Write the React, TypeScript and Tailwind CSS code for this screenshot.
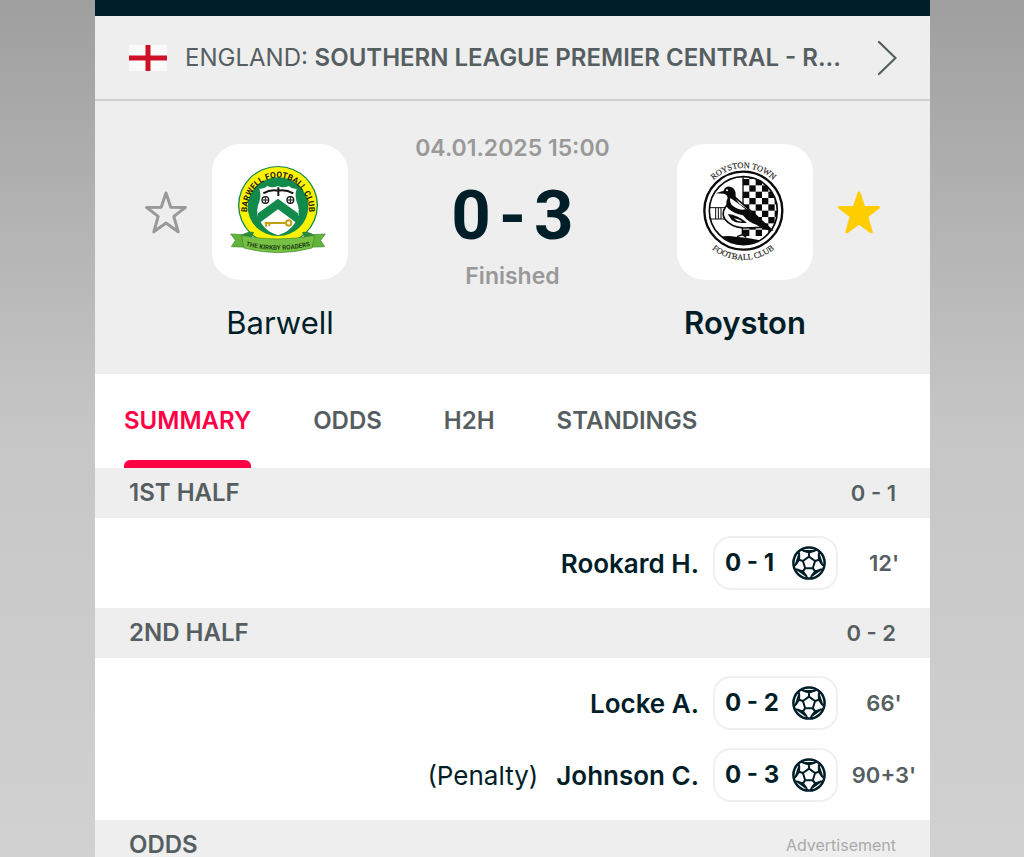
import type { ReactNode } from 'react';

type Goal = { player: string; score: string; time: string; note?: string };

const tabs = ['SUMMARY', 'ODDS', 'H2H', 'STANDINGS'];

const firstHalf: Goal[] = [{ player: 'Rookard H.', score: '0 - 1', time: "12'" }];

const secondHalf: Goal[] = [
  { player: 'Locke A.', score: '0 - 2', time: "66'" },
  { player: 'Johnson C.', score: '0 - 3', time: "90+3'", note: '(Penalty)' },
];

const STAR = 'M22 2 L26.8 16.2 L41.5 16.4 L29.8 25.4 L34.2 40.8 L22 32 L9.8 40.8 L14.2 25.4 L2.5 16.4 L17.2 16.2 Z';

function EnglandFlag() {
  return (
    <svg className="h-[26px] w-[38px] shrink-0" viewBox="0 0 38 26" aria-label="England">
      <rect width="38" height="26" fill="#fafafa" />
      <rect y="10.5" width="38" height="5" fill="#ce1126" />
      <rect x="16.5" width="5" height="26" fill="#ce1126" />
    </svg>
  );
}

function BallIcon() {
  const point = (r: number, deg: number) => {
    const a = (deg * Math.PI) / 180;
    return `${(17 + r * Math.cos(a)).toFixed(1)} ${(17 + r * Math.sin(a)).toFixed(1)}`;
  };
  const spokes = [-90, -18, 54, 126, 198];

  return (
    <svg className="size-[34px] shrink-0" viewBox="0 0 34 34" fill="none" stroke="#001e28" strokeWidth="2" strokeLinejoin="round">
      <circle cx="17" cy="17" r="15.6" strokeWidth="2.5" />
      <path d={`M${spokes.map((d) => point(6.4, d)).join(' L')} Z`} />
      {spokes.map((d) => (
        <path
          key={d}
          d={`M${point(6.4, d)} L${point(10.4, d)} M${point(15.4, d - 29)} L${point(13.2, d - 24)} L${point(10.4, d)} L${point(13.2, d + 24)} L${point(15.4, d + 29)} M${point(13.2, d - 24)} L${point(13.2, d + 24)}`}
        />
      ))}
    </svg>
  );
}

function BarwellCrest() {
  return (
    <svg className="size-full" viewBox="6 12 408 408" aria-label="Barwell crest">
      <defs>
        <path id="barwell-arc" d="M111 216 A93 103 0 0 1 297 216" />
        <path id="barwell-ribbon" d="M98 315 Q204 344 310 315" />
      </defs>
      <ellipse cx="204" cy="196" rx="120" ry="118" fill="#128a4c" />
      <ellipse cx="204" cy="196" rx="116" ry="115" fill="#fff200" />
      <ellipse cx="204" cy="200" rx="91" ry="88" fill="#128a4c" />
      <text fontFamily="Roboto, sans-serif" fontSize="25" fontWeight="700" fill="#1d1d0a">
        <textPath href="#barwell-arc" startOffset="50%" textAnchor="middle">BARWELL FOOTBALL CLUB</textPath>
      </text>
      <path d="M148 146 Q162 148 172 138 Q188 146 204 138 Q220 146 236 138 Q246 148 260 146 Q252 170 264 196 Q272 226 254 250 Q238 276 204 286 Q170 276 154 250 Q136 226 144 196 Q156 170 148 146 Z" fill="#ffffff" />
      <path d="M204 176 L264 220 L264 252 L204 208 L144 252 L144 220 Z" fill="#128a4c" />
      <path d="M160 160 Q180 148 204 152 Q228 148 250 160 M205 142 V168" fill="none" stroke="#161616" strokeWidth="6" />
      <g fill="none" stroke="#161616" strokeWidth="4">
        <circle cx="166" cy="180" r="10" />
        <circle cx="241" cy="180" r="10" />
        <path d="M166 170 V190 M156 180 H176 M241 170 V190 M231 180 H251" strokeWidth="3" />
      </g>
      <circle cx="236" cy="249" r="8" fill="none" stroke="#c3a012" strokeWidth="6" />
      <path d="M228 249 H164 M168 249 V260 M178 249 V258" fill="none" stroke="#c3a012" strokeWidth="6" />
      <path d="M62 282 L104 284 L116 322 L64 320 L76 301 Z M346 282 L304 284 L292 322 L344 320 L332 301 Z" fill="#62b33b" stroke="#3d8a2c" strokeWidth="2" />
      <path d="M94 286 Q204 308 314 286 L306 324 Q204 352 102 324 Z" fill="#76c043" stroke="#3d8a2c" strokeWidth="2" />
      <path d="M94 286 Q112 272 132 276 L126 292 Z M314 286 Q296 272 276 276 L282 292 Z" fill="#2c8a3a" />
      <text fontFamily="Roboto, sans-serif" fontSize="19" fontWeight="700" fill="#1e4317">
        <textPath href="#barwell-ribbon" startOffset="50%" textAnchor="middle">THE KIRKBY ROADERS</textPath>
      </text>
    </svg>
  );
}

function RoystonCrest() {
  const squares: ReactNode[] = [];
  for (let row = 0; row < 10; row++) {
    for (let col = 0; col < 6; col++) {
      if ((row + col) % 2 === 1) {
        squares.push(<rect key={`${row}-${col}`} x={204 + col * 19} y={98 + row * 19} width="19" height="19" fill="#0a0a0a" />);
      }
    }
  }

  return (
    <svg className="size-full" viewBox="6 12 408 408" aria-label="Royston Town crest">
      <defs>
        <path id="royston-top" d="M77 212 A128 128 0 0 1 333 212" />
        <path id="royston-bottom" d="M57 212 A148 148 0 0 0 353 212" />
        <clipPath id="royston-disc">
          <circle cx="205" cy="212" r="102" />
        </clipPath>
      </defs>
      <g fontFamily="Liberation Serif, serif" fontSize="25" fill="#222222" stroke="#222222" strokeWidth="0.5">
        <text>
          <textPath href="#royston-top" startOffset="50%" textAnchor="middle">ROYSTON  TOWN</textPath>
        </text>
        <text>
          <textPath href="#royston-bottom" startOffset="50%" textAnchor="middle">FOOTBALL CLUB</textPath>
        </text>
      </g>
      <circle cx="205" cy="212" r="117" fill="#ffffff" stroke="#0a0a0a" strokeWidth="7" />
      <g clipPath="url(#royston-disc)">
        <path d="M204 100 V230" stroke="#0a0a0a" strokeWidth="4" />
        {squares}
        <path d="M100 203 H150 M100 237 H160 M122 203 V237 M130 203 V237 M138 203 V237" stroke="#0a0a0a" strokeWidth="3" />
        <path d="M100 298 Q150 284 180 290 Q230 294 270 304 V330 H100 Z" fill="#0a0a0a" />
        <path d="M152 200 Q138 220 150 238 Q168 262 206 264 L262 262 L292 272 L240 224 Q208 196 178 170 Z" fill="#ffffff" stroke="#0a0a0a" strokeWidth="5" />
      </g>
      {/* Crow */}
      <path d="M122 160 L146 152 Q150 138 166 140 Q182 144 182 164 Q180 178 194 192 Q216 206 240 224 L296 272 Q270 272 244 254 Q220 248 204 226 Q178 222 158 204 Q150 190 158 174 Q156 162 146 161 Z" fill="#0a0a0a" />
      <path d="M166 174 Q182 184 212 208 Q192 212 174 198 Q162 188 166 174 Z" fill="#ffffff" />
      <path d="M158 222 Q186 224 216 248 Q186 252 170 240 Z" fill="#0a0a0a" />
      <path d="M176 235 Q190 236 202 244 Q188 246 176 235 Z" fill="#ffffff" />
      <path d="M202 264 V284 L186 290 M202 284 L214 292" fill="none" stroke="#0a0a0a" strokeWidth="4" />
      <circle cx="156" cy="151" r="3" fill="#ffffff" />
      <circle cx="205" cy="212" r="102" fill="none" stroke="#0a0a0a" strokeWidth="5" />
    </svg>
  );
}

function Team({ name, bold, children }: { name: string; bold?: boolean; children: ReactNode }) {
  return (
    <div className="flex w-[136px] shrink-0 flex-col items-center gap-6">
      <div className="size-[136px] overflow-hidden rounded-[28px] bg-white">{children}</div>
      <p className={`text-[31px] leading-[38px] ${bold ? 'font-semibold' : 'font-normal'}`}>{name}</p>
    </div>
  );
}

function FavouriteButton({ label, active }: { label: string; active?: boolean }) {
  return (
    <button type="button" aria-label={label} aria-pressed={!!active} className="mt-[47px] size-11 shrink-0">
      <svg className="size-11" viewBox="0 0 44 44" strokeWidth="3" strokeLinejoin="round" fill={active ? '#ffcd00' : 'none'} stroke={active ? '#ffcd00' : '#999999'}>
        <path d={STAR} />
      </svg>
    </button>
  );
}

function HalfHeader({ title, score }: { title: string; score: string }) {
  return (
    <div className="flex h-[50px] items-center justify-between bg-[#eeeeee] px-[34px] font-semibold text-[#555e61]">
      <h2 className="text-[24px]">{title}</h2>
      <span className="text-[22px]">{score}</span>
    </div>
  );
}

function GoalList({ goals }: { goals: Goal[] }) {
  return (
    <ul className="flex flex-col gap-[18px] py-[18px]">
      {goals.map((goal) => (
        <li key={goal.score} className="flex items-center justify-end text-[26px]">
          {goal.note && <span className="mr-[18px]">{goal.note}</span>}
          <span className="mr-[14px] font-semibold">{goal.player}</span>
          <span className="flex h-[54px] w-[125px] items-center justify-between rounded-[18px] border-2 border-[#f0f0f0] px-[10px] text-[24px] font-bold">
            {goal.score}
            <BallIcon />
          </span>
          <span className="w-[92px] text-center text-[22px] font-semibold text-[#555e61]">{goal.time}</span>
        </li>
      ))}
    </ul>
  );
}

function App() {
  return (
    <div className="min-h-screen bg-linear-to-b from-[#9f9fa0] via-[#c6c6c6] to-[#d2d1d2] pr-[94px] pl-[95px] font-['Inter',sans-serif] text-[#001e28]">
      <main className="flex min-h-screen flex-col bg-white">
        <div className="h-4 bg-[#001e28]" />

        {/* League */}
        <a href="#league" className="flex h-[85px] items-center border-b-2 border-[#cfd0d0] bg-[#eeeeee] pr-[33px] pl-[34px] text-[#555e61]">
          <EnglandFlag />
          <span className="ml-[18px] flex-1 text-[24px] whitespace-nowrap">
            ENGLAND: <strong className="font-semibold">SOUTHERN LEAGUE PREMIER CENTRAL - R...</strong>
          </span>
          <svg className="h-9 w-5 shrink-0" viewBox="0 0 20 36" fill="none" stroke="#555e61" strokeWidth="2.2" strokeLinecap="round">
            <path d="M2 2 L18.5 18 L2 34" />
          </svg>
        </a>

        {/* Match header */}
        <section className="flex h-[273px] items-start bg-[#eeeeee] px-[49px] pt-[43px]">
          <FavouriteButton label="Add Barwell to favourites" />
          <div className="ml-6">
            <Team name="Barwell">
              <BarwellCrest />
            </Team>
          </div>
          <div className="-mt-3 flex flex-1 flex-col items-center whitespace-nowrap text-[#999999]">
            <p className="text-[23px] leading-8 font-semibold">04.01.2025 15:00</p>
            <p className="mt-5 mb-3 flex gap-2 font-['Roboto',sans-serif] text-[69px] leading-16 font-bold text-[#001e28]">
              <span>0</span>
              <span>-</span>
              <span>3</span>
            </p>
            <p className="text-[23px] leading-8 font-semibold">Finished</p>
          </div>
          <div className="mr-6">
            <Team name="Royston" bold>
              <RoystonCrest />
            </Team>
          </div>
          <FavouriteButton label="Remove Royston from favourites" active />
        </section>

        {/* Tabs */}
        <nav className="flex h-[94px] gap-[62px] px-[29px]">
          {tabs.map((tab, i) => (
            <button
              key={tab}
              type="button"
              className={`relative text-[24px] font-semibold ${i === 0 ? 'text-[#ff0046]' : 'text-[#555e61]'}`}
            >
              {tab}
              {i === 0 && <span className="absolute inset-x-0 bottom-0 h-2 rounded-t-md bg-[#ff0046]" />}
            </button>
          ))}
        </nav>

        <HalfHeader title="1ST HALF" score="0 - 1" />
        <GoalList goals={firstHalf} />
        <HalfHeader title="2ND HALF" score="0 - 2" />
        <GoalList goals={secondHalf} />

        <div className="flex flex-1 items-start justify-between bg-[#eeeeee] px-[34px] pt-[13px] leading-6">
          <h2 className="text-[24px] leading-6 font-semibold text-[#555e61]">ODDS</h2>
          <span className="text-[16px] text-[#aaaaaa]">Advertisement</span>
        </div>
      </main>
    </div>
  );
}

export default App;
